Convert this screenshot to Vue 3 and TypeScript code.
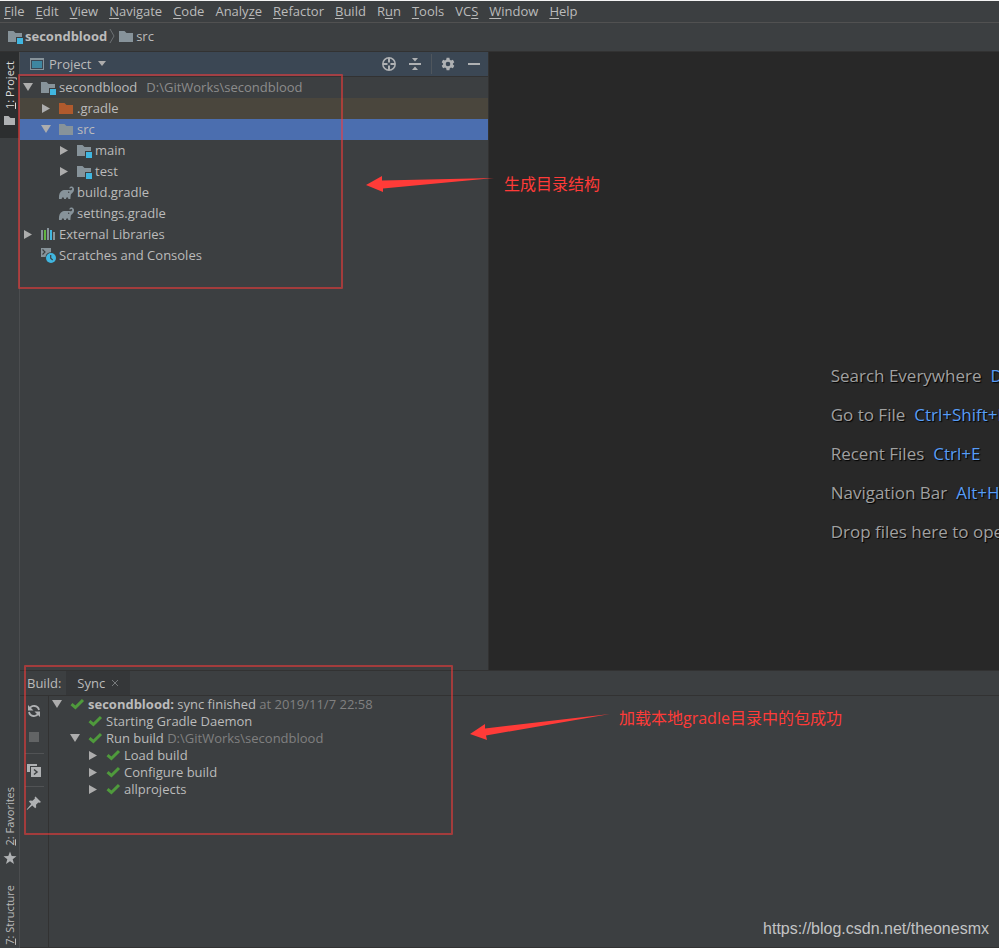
<script setup lang="ts">
import { ref } from 'vue'

interface MenuItem {
  before: string
  key: string
  after: string
}

interface TreeRow {
  name: string
  path?: string
  depth: number
  icon: string
  state?: 'open' | 'closed'
}

interface BuildRow {
  title?: string
  name: string
  note?: string
  depth: number
  state?: 'open' | 'closed'
}

interface Hint {
  label: string
  shortcut?: string
}

const menu: MenuItem[] = [
  { before: '', key: 'F', after: 'ile' },
  { before: '', key: 'E', after: 'dit' },
  { before: '', key: 'V', after: 'iew' },
  { before: '', key: 'N', after: 'avigate' },
  { before: '', key: 'C', after: 'ode' },
  { before: 'Analy', key: 'z', after: 'e' },
  { before: '', key: 'R', after: 'efactor' },
  { before: '', key: 'B', after: 'uild' },
  { before: 'R', key: 'u', after: 'n' },
  { before: '', key: 'T', after: 'ools' },
  { before: 'VC', key: 'S', after: '' },
  { before: '', key: 'W', after: 'indow' },
  { before: '', key: 'H', after: 'elp' },
]

const files: TreeRow[] = [
  { name: 'secondblood', path: 'D:\\GitWorks\\secondblood', depth: 0, icon: 'module', state: 'open' },
  { name: '.gradle', depth: 1, icon: 'excluded', state: 'closed' },
  { name: 'src', depth: 1, icon: 'folder', state: 'open' },
  { name: 'main', depth: 2, icon: 'module', state: 'closed' },
  { name: 'test', depth: 2, icon: 'module', state: 'closed' },
  { name: 'build.gradle', depth: 1, icon: 'gradle' },
  { name: 'settings.gradle', depth: 1, icon: 'gradle' },
  { name: 'External Libraries', depth: 0, icon: 'libraries', state: 'closed' },
  { name: 'Scratches and Consoles', depth: 0, icon: 'scratches' },
]

const selected = ref('src')

const steps: BuildRow[] = [
  { title: 'secondblood:', name: 'sync finished', note: 'at 2019/11/7 22:58', depth: 0, state: 'open' },
  { name: 'Starting Gradle Daemon', depth: 1 },
  { name: 'Run build', note: 'D:\\GitWorks\\secondblood', depth: 1, state: 'open' },
  { name: 'Load build', depth: 2, state: 'closed' },
  { name: 'Configure build', depth: 2, state: 'closed' },
  { name: 'allprojects', depth: 2, state: 'closed' },
]

const hints: Hint[] = [
  { label: 'Search Everywhere', shortcut: 'Double Shift' },
  { label: 'Go to File', shortcut: 'Ctrl+Shift+N' },
  { label: 'Recent Files', shortcut: 'Ctrl+E' },
  { label: 'Navigation Bar', shortcut: 'Alt+Home' },
  { label: 'Drop files here to open' },
]
</script>

<template>
  <svg class="sprite" aria-hidden="true">
    <symbol id="folder" viewBox="0 0 16 16">
      <path fill="#87939a" d="M1 3h5.5l2 2H15v9H1z" />
    </symbol>
    <symbol id="excluded" viewBox="0 0 16 16">
      <path fill="#b05a2d" d="M1 3h5.5l2 2H15v9H1z" />
    </symbol>
    <symbol id="module" viewBox="0 0 16 16">
      <path fill="#87939a" d="M1 3h5.5l2 2H15v4H9v5H1z" />
      <path fill="#40b6e0" d="M10 10h6v6h-6z" />
    </symbol>
    <symbol id="gradle" viewBox="0 0 16 16">
      <path fill="#87939a" d="M1 15C.7 11 1.500 8 4.300 6.500 6.500 5.400 9 6.200 10.500 6 11.700 5.800 12.600 6.500 13.500 5.900 14.500 5.200 14.400 4 13.400 3.900c-.7 0-.9.5-1.400.7-.5.100-.8-.3-.6-.7.600-1.200 2.200-1.700 3.400-1 1.700 1 1.500 3.700.4 5-.9 1.200-2.100 1.700-2.400 2.800-.3 1.400-.3 2.900-.4 4.300h-2.100c0-1-.3-1.800-1.100-1.800S8.100 14 8 15H6.100c0-1-.4-1.800-1.200-1.800S3.800 14 3.700 15z" />
      <circle cx="10.700" cy="8.300" r=".7" fill="#3c3f41" />
    </symbol>
    <symbol id="libraries" viewBox="0 0 16 16">
      <path fill="#87939a" d="M1 4h2v10H1zM7 2h2v12H7zM13 6h2v8h-2z" />
      <path fill="#62b543" d="M4 4h2v10H4z" />
      <path fill="#40b6e0" d="M10 4h2v10h-2z" />
    </symbol>
    <symbol id="scratches" viewBox="0 0 16 16">
      <path fill="#87939a" d="M1 1h10v4.300A5.700 5.700 0 0 0 5.500 10H1z" />
      <path fill="none" stroke="#3c3f41" stroke-width="1.200" d="M2.500 2.500 5 5 2.500 7.500" />
      <circle cx="11" cy="11" r="5" fill="#40b6e0" />
      <path fill="none" stroke="#3c3f41" stroke-width="1.200" d="M10.700 8v3.300l2 1.700" />
    </symbol>
    <symbol id="check" viewBox="0 0 16 16">
      <path fill="none" stroke="#4f9a3c" stroke-width="3" d="M2.500 8.200 6.400 11.500 14 4" />
    </symbol>
    <symbol id="open" viewBox="0 0 14 14">
      <path fill="#adadad" d="M2 3h10L7 11z" />
    </symbol>
    <symbol id="closed" viewBox="0 0 14 14">
      <path fill="#adadad" d="M3 3v9l8-4.500z" />
    </symbol>
  </svg>

  <div class="ide">
    <nav class="menu" aria-label="Main menu">
      <button v-for="m in menu" :key="m.key + m.after" type="button">{{ m.before }}<u>{{ m.key }}</u>{{ m.after }}</button>
    </nav>

    <nav class="crumbs" aria-label="Path">
      <svg class="icon"><use href="#module" /></svg>
      <a href="#secondblood"><b>secondblood</b></a>
      <svg class="chevron" viewBox="0 0 6 16"><path d="M1 1l4 7-4 7" fill="none" stroke="#6c7073" /></svg>
      <svg class="icon"><use href="#folder" /></svg>
      <a href="#src">src</a>
    </nav>

    <div class="body">
      <aside class="stripe">
        <button type="button" class="active">
          <svg class="small" viewBox="0 0 12 12"><path fill="#afb1b3" d="M0 1h4.500l2 2H11v7H0z" /></svg>
          <span class="side"><u>1</u>: Project</span>
        </button>
        <div class="lower">
          <button type="button">
            <svg class="star" viewBox="0 0 14 14"><path fill="#afb1b3" d="M7 .5l1.700 4.500 4.800.2-3.800 3 1.300 4.700-4-2.700-4 2.700 1.300-4.700-3.800-3 4.800-.2z" /></svg>
            <span class="side"><u>2</u>: Favorites</span>
          </button>
          <button type="button"><span class="side"><u>7</u>: Structure</span></button>
        </div>
      </aside>

      <div class="work">
        <div class="upper">
          <section class="project">
            <header class="bar">
              <button type="button" class="view">
                <svg class="icon" viewBox="0 0 16 16">
                  <path fill="#87939a" d="M1 2h14v12H1z" /><path fill="#3b4754" d="M2 4h12v9H2z" /><path fill="#3e86a0" d="M3 5h10v7H3z" />
                </svg>
                <span>Project</span>
                <svg class="caret" viewBox="0 0 10 6"><path fill="#adadad" d="M1 0h8L5 5z" /></svg>
              </button>
              <button type="button" aria-label="Locate file">
                <svg class="icon" viewBox="0 0 16 16"><g fill="none" stroke="#afb1b3"><circle cx="8" cy="8" r="6.200" stroke-width="1.500" /><path stroke-width="2" d="M8 2v4.500M8 9.500V14M2 8h4.500M9.500 8H14" /></g></svg>
              </button>
              <button type="button" aria-label="Collapse all">
                <svg class="icon" viewBox="0 0 16 16"><path fill="#afb1b3" d="M2 7h12v2H2zM5 2h6L8 5.500zM5 14h6l-3-3.500z" /></svg>
              </button>
              <span class="rule"></span>
              <button type="button" aria-label="Settings">
                <svg class="icon" viewBox="0 0 16 16"><path fill="#afb1b3" fill-rule="evenodd" d="M6.600 1.800h2.800l.4 1.900 1.200.7 1.900-.6 1.400 2.400L12.900 7.500v1l1.400 1.300-1.400 2.400-1.900-.6-1.200.7-.4 1.900H6.600l-.4-1.900-1.200-.7-1.900.6-1.400-2.400L3.100 8.500v-1L1.700 6.200l1.400-2.400 1.900.6 1.200-.7zM8 5.700a2.300 2.300 0 1 0 0 4.600 2.300 2.300 0 0 0 0-4.600z" /></svg>
              </button>
              <button type="button" aria-label="Hide">
                <svg class="icon" viewBox="0 0 16 16"><path fill="#afb1b3" d="M2 7h12v2H2z" /></svg>
              </button>
            </header>
            <ul class="tree files">
              <li v-for="f in files" :key="f.name" :class="['depth' + f.depth, { selected: selected === f.name, generated: f.icon === 'excluded' }]">
                <button type="button" @click="selected = f.name">
                  <svg class="toggle"><use v-if="f.state" :href="'#' + f.state" /></svg>
                  <svg class="icon"><use :href="'#' + f.icon" /></svg>
                  <span>{{ f.name }}</span>
                  <span v-if="f.path" class="path">{{ f.path }}</span>
                </button>
              </li>
            </ul>
            <div class="frame"></div>
            <div class="callout">
              <svg viewBox="0 0 128 20"><path fill="#ff3b38" d="M0 9 16 0v4.500L128 2 17 12.500V16z" /></svg>
              <span>生成目录结构</span>
            </div>
          </section>

          <main class="editor">
            <dl>
              <div v-for="h in hints" :key="h.label">
                <dt>{{ h.label }}</dt>
                <dd v-if="h.shortcut">{{ h.shortcut }}</dd>
              </div>
            </dl>
          </main>
        </div>

        <section class="build">
          <header class="tabs">
            <span class="title">Build:</span>
            <button type="button" class="tab">
              <span>Sync</span>
              <svg viewBox="0 0 8 8"><path d="M1 1l6 6M7 1 1 7" stroke="#777a7c" /></svg>
            </button>
          </header>
          <div class="output">
            <div class="tools">
              <button type="button" aria-label="Refresh">
                <svg class="icon" viewBox="0 0 16 16"><g fill="none" stroke="#afb1b3" stroke-width="1.800"><path d="M3.500 6A5 5 0 0 1 13 7M12.500 10A5 5 0 0 1 3 9" /></g><path fill="#afb1b3" d="M2 2v5.500h5.500zM14 14V8.500H8.500z" /></svg>
              </button>
              <button type="button" aria-label="Stop" class="stop">
                <svg class="icon" viewBox="0 0 16 16"><path fill="#626465" d="M3 3h10v10H3z" /></svg>
              </button>
              <hr />
              <button type="button" aria-label="Toggle view">
                <svg class="icon" viewBox="0 0 16 16"><path fill="#afb1b3" d="M1 2h10v2H4v6H1z" /><path fill="#afb1b3" d="M5 5h10v10H5z" /><path fill="none" stroke="#3c3f41" stroke-width="1.500" d="M8 7.500l3 2.500-3 2.500" /></svg>
              </button>
              <hr />
              <button type="button" aria-label="Pin tab">
                <svg class="icon" viewBox="0 0 16 16"><path fill="#afb1b3" d="M9.500 1.500 15 7l-1.300.7-1.400-.3-2.300 2.300.2 2.600-1 1-2.900-2.900L1 15l-.2-.8 4.400-5.300L2.900 6.600l1-1 2.600.2 2.400-2.300-.2-1.300z" /></svg>
              </button>
            </div>
            <ul class="tree steps">
              <li v-for="s in steps" :key="s.name" :class="'depth' + s.depth">
                <button type="button">
                  <svg class="toggle"><use v-if="s.state" :href="'#' + s.state" /></svg>
                  <svg class="icon"><use href="#check" /></svg>
                  <span><b v-if="s.title">{{ s.title }}</b><template v-if="s.title">&nbsp;</template>{{ s.name }} <span v-if="s.note" class="note">{{ s.note }}</span></span>
                </button>
              </li>
            </ul>
          </div>
          <div class="frame"></div>
          <div class="callout">
            <svg viewBox="0 0 140 28"><path fill="#ff3b38" d="M0 20 15 10v4.500L140 0 16 21.500 17 26z" /></svg>
            <span>加载本地gradle目录中的包成功</span>
          </div>
          <a class="watermark" href="https://blog.csdn.net/theonesmx">https://blog.csdn.net/theonesmx</a>
        </section>
      </div>
    </div>
  </div>
</template>

<style>
body {
  margin: 0;
  background: #3c3f41;
}
</style>

<style scoped>
.sprite {
  position: absolute;
  width: 0;
  height: 0;
}

.ide {
  display: flex;
  flex-direction: column;
  box-sizing: border-box;
  height: 100vh;
  overflow: hidden;
  border-top: 1px solid #f4f4f4;
  background: #3c3f41;
  color: #bbbbbb;
  font: 13px/20px "Open Sans", "Noto Sans CJK SC", sans-serif;
}

button {
  display: flex;
  align-items: center;
  margin: 0;
  padding: 0;
  border: 0;
  background: none;
  color: inherit;
  font: inherit;
  white-space: pre;
}

a {
  color: inherit;
  text-decoration: none;
}

svg {
  display: block;
  flex: none;
}

u {
  text-underline-offset: 2px;
}

.icon {
  width: 16px;
  height: 16px;
}

.menu {
  display: flex;
  align-items: flex-start;
  gap: 11px;
  height: 21px;
  padding-left: 4px;
  border-bottom: 1px solid #515151;
}

.crumbs {
  display: flex;
  align-items: center;
  gap: 2px;
  box-sizing: border-box;
  height: 29px;
  padding: 0 0 2px 7px;
  border-bottom: 1px solid #323232;
}

.chevron {
  width: 6px;
  height: 16px;
  margin-right: 1px;
}

.body {
  display: flex;
  flex: 1;
  min-height: 0;
}

.stripe {
  display: flex;
  flex-direction: column;
  justify-content: space-between;
  width: 19px;
  border-right: 1px solid #4b4d4f;
  font-size: 11px;
}

.stripe button {
  flex-direction: column-reverse;
  gap: 6px;
  width: 19px;
}

.stripe .active {
  padding: 9px 0 11px;
  background: #2c2e2f;
  color: #dddddd;
}

.side {
  width: 20px;
  line-height: 20px;
  writing-mode: vertical-rl;
  transform: rotate(180deg);
}

.side u {
  text-underline-offset: -1px;
}

.small {
  width: 12px;
  height: 12px;
}

.star {
  width: 14px;
  height: 14px;
}

.lower {
  display: flex;
  flex-direction: column;
  gap: 20px;
  padding-bottom: 3px;
}

.work {
  display: grid;
  flex: 1;
  grid-template-rows: minmax(0, 69fr) minmax(0, 31fr);
  min-width: 0;
}

.upper {
  display: grid;
  grid-template-columns: minmax(0, 479fr) minmax(0, 521fr);
}

.project {
  position: relative;
  z-index: 1;
  border-right: 1px solid #323232;
}

.bar {
  display: flex;
  align-items: center;
  gap: 10px;
  height: 24px;
  padding: 0 6px 0 9px;
  border-bottom: 1px solid #323232;
  background: #3b4754;
}

.view {
  gap: 4px;
  margin-right: auto;
}

.caret {
  width: 10px;
  height: 6px;
  margin-left: 2px;
}

.rule {
  width: 1px;
  height: 20px;
  margin-right: -2px;
  margin-left: -2px;
  background: #4f565d;
}

.tree {
  flex: 1;
  margin: 0;
  padding: 0;
  list-style: none;
}

.tree li {
  padding-left: 1px;
}

.tree .depth1 {
  padding-left: 19px;
}

.tree .depth2 {
  padding-left: 37px;
}

.tree button {
  gap: 3px;
  width: 100%;
  padding-bottom: 2px;
  text-align: left;
}

.toggle {
  width: 14px;
  height: 14px;
  margin-right: 2px;
}

.files button {
  height: 21px;
}

.steps button {
  height: 17px;
}

.files .generated {
  background: #4a463d;
}

.files .selected {
  background: #4b6eaf;
}

.path {
  margin-left: 6px;
  color: #8c8c8c;
}

.note {
  color: #808080;
}

.frame {
  position: absolute;
  box-sizing: border-box;
  border: 2px solid rgba(255, 59, 56, 0.53);
  border-radius: 1px;
  pointer-events: none;
}

.project .frame {
  top: 22px;
  left: -2px;
  width: 325px;
  height: 215px;
}

.build .frame {
  top: -6px;
  left: 4px;
  width: 429px;
  height: 170px;
}

.callout {
  position: absolute;
  display: flex;
  color: #ff3b38;
  font-size: 16px;
  line-height: 24px;
  white-space: nowrap;
}

.project .callout {
  top: 120px;
  left: 346px;
  gap: 10px;
}

.project .callout svg {
  width: 128px;
  height: 20px;
  margin-top: 4px;
}

.build .callout {
  top: 35px;
  left: 450px;
  gap: 9px;
}

.build .callout svg {
  width: 140px;
  height: 28px;
  margin-top: 8px;
}

.editor {
  overflow: hidden;
  padding: 304px 0 0 67%;
  background: #282828;
  color: #a0a0a0;
  font-size: 17px;
  line-height: 39px;
  text-shadow: 1px 1px 1px #000000;
}

.editor dl {
  margin: 0;
}

.editor dl div {
  display: flex;
  gap: 9px;
  white-space: nowrap;
}

.editor dd {
  margin: 0;
  color: #589df6;
}

.build {
  position: relative;
  display: flex;
  flex-direction: column;
  border-top: 1px solid #323232;
  border-bottom: 1px solid #323232;
}

.tabs {
  display: flex;
  align-items: center;
  height: 24px;
  padding-left: 7px;
  gap: 5px;
  border-bottom: 1px solid #323232;
}

.tab {
  gap: 6px;
  height: 24px;
  padding: 0 11px;
  background: #353739;
}

.tab svg {
  width: 8px;
  height: 8px;
}

.output {
  display: flex;
  flex: 1;
}

.tools {
  display: flex;
  flex-direction: column;
  align-items: center;
  gap: 10px;
  width: 28px;
  padding-top: 7px;
  border-right: 1px solid #323232;
}

.tools hr {
  width: 19px;
  height: 1px;
  margin: -2px 0;
  border: 0;
  background: #515355;
}

.watermark {
  position: absolute;
  right: 10px;
  bottom: 8px;
  color: #c3c4c5;
  font: 16px/20px "Liberation Sans", sans-serif;
}
</style>
